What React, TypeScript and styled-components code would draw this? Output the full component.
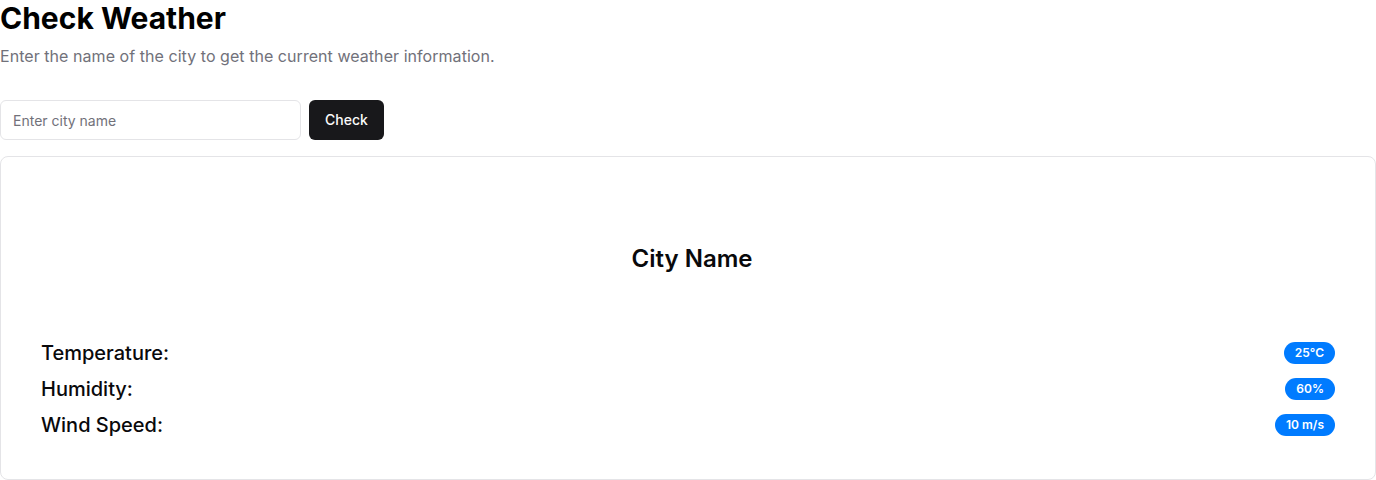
import React from "react";
import styled, { createGlobalStyle } from "styled-components";

const Global = createGlobalStyle`
  * { box-sizing: border-box; }
  body { margin: 0; background: #ffffff; font-family: Inter, "Noto Sans", sans-serif; color: #09090b; }
`;

const Page = styled.div`
  display: flex;
  flex-direction: column;
`;

const Title = styled.h1`
  margin: 0;
  font-size: 30px;
  line-height: 36px;
  font-weight: 700;
  color: #000;
`;

const Subtitle = styled.p`
  margin: 8px 0 0;
  font-size: 16px;
  line-height: 24px;
  color: #71717a;
  letter-spacing: 0.05px;
`;

const Form = styled.form`
  display: flex;
  gap: 8px;
  margin-top: 32px;
`;

const Input = styled.input`
  width: 301px;
  height: 40px;
  border: 1px solid #e4e4e7;
  border-radius: 6px;
  padding: 0 12px;
  font-family: inherit;
  font-size: 14px;
  color: #09090b;
  outline: none;
  &::placeholder { color: #71717a; }
`;

const Button = styled.button`
  height: 40px;
  padding: 0 16px 1px;
  border: none;
  border-radius: 6px;
  background: #18181b;
  color: #fafafa;
  font-family: inherit;
  font-size: 14px;
  font-weight: 500;
`;

const Card = styled.div`
  margin-top: 16px;
  border: 1px solid #e4e4e7;
  border-radius: 8px;
  padding: 40px;
  display: flex;
  flex-direction: column;
`;

const CityName = styled.h2`
  margin: 46px 0 0;
  padding-left: 8px;
  text-align: center;
  font-size: 24px;
  line-height: 32px;
  font-weight: 600;
`;

const Rows = styled.div`
  margin-top: 64px;
  display: flex;
  flex-direction: column;
  gap: 8px;
`;

const Row = styled.div`
  display: flex;
  justify-content: space-between;
  align-items: center;
  height: 28px;
`;

const Label = styled.span`
  font-size: 20px;
  line-height: 28px;
  font-weight: 500;
`;

const Badge = styled.span`
  background: #007bff;
  color: #fff;
  border-radius: 9999px;
  padding: 2px 11px;
  font-size: 12px;
  line-height: 18px;
  font-weight: 600;
`;

const data = [
  ["Temperature:", "25°C"],
  ["Humidity:", "60%"],
  ["Wind Speed:", "10 m/s"],
];

export default function App() {
  return (
    <Page>
      <Global />
      <Title>Check Weather</Title>
      <Subtitle>Enter the name of the city to get the current weather information.</Subtitle>
      <Form onSubmit={(e) => e.preventDefault()}>
        <Input placeholder="Enter city name" />
        <Button type="submit">Check</Button>
      </Form>
      <Card>
        <CityName>City Name</CityName>
        <Rows>
          {data.map(([l, v]) => (
            <Row key={l}>
              <Label>{l}</Label>
              <Badge>{v}</Badge>
            </Row>
          ))}
        </Rows>
      </Card>
    </Page>
  );
}
